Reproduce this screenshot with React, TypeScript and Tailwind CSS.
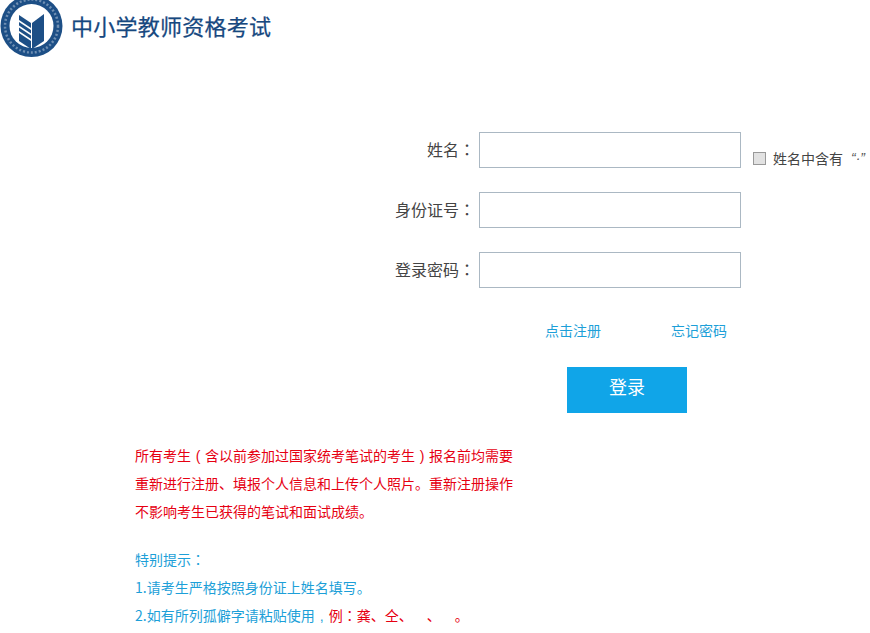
const Tc = ({ children }: { children: string }) => (
  <span className="font-['Noto_Sans_CJK_TC',sans-serif] leading-none">{children}</span>
);

// half-width punctuation padded out to one character cell, as in the original page
const Punct = ({ children }: { children: string }) => (
  <span className="inline-block w-[14px] text-center font-['Liberation_Sans',sans-serif] leading-none">{children}</span>
);

export default function App() {
  const sans = "font-['Microsoft_YaHei','Noto_Sans_CJK_SC',sans-serif]";

  const fields = [
    { label: '姓名', type: 'text' },
    { label: '身份证号', type: 'text' },
    { label: '登录密码', type: 'password' },
  ];

  return (
    <div className={`h-[633px] overflow-hidden bg-white ${sans}`}>
      {/* logo + title */}
      <div className="flex h-[62px] items-start">
        <svg width="64" height="58" viewBox="0 0 64 58" className="shrink-0">
          <circle cx="31.5" cy="26" r="31" fill="#1d4f86" />
          <circle cx="31.5" cy="26" r="26.5" fill="none" stroke="#6f8fb3" strokeWidth="2.5" strokeDasharray="2 2" />
          <circle cx="31.5" cy="26" r="22" fill="#fff" />
          <path d="M32 23 L44 14 V41 L32 49 Z" fill="#1d4f86" />
          <path d="M19 15 L31 23 V28 L19 20 Z M19 22 L31 30 V33.5 L19 25.5 Z M19 27.5 L31 35.5 V39 L19 31 Z M19 33 L31 41 V49 L19 41 Z" fill="#1d4f86" />
        </svg>
        <div className="ml-[7px] mt-[10px] text-[22px] leading-[30px] tracking-[0.25px] text-[#17487f] [-webkit-text-stroke:0.25px_#17487f]">
          中小学教师资格考试
        </div>
      </div>

      {/* form */}
      <div className="mt-[70px] flex flex-col gap-6">
        {fields.map((f, i) => (
          <div key={f.label} className="flex items-center">
            <label className="w-[475px] shrink-0 text-right text-[16px] leading-6 -mt-[2px] text-[#444]">
              {f.label}
              <Tc>：</Tc>
            </label>
            <input type={f.type} className="ml-[4px] h-9 w-[262px] shrink-0 border border-[#abb8c3] bg-white outline-none" />
            {i === 0 && (
              <div className="ml-3 mt-[16px] flex items-center text-[14px] leading-5 whitespace-nowrap text-[#444]">
                <input type="checkbox" className="h-[13px] w-[13px] appearance-none border border-[#999] bg-[#e2e2e2]" />
                <span className="ml-[7px]">姓名中含有</span>
                <span className="ml-2 font-['Liberation_Sans',sans-serif] italic text-[#555]">“·”</span>
              </div>
            )}
          </div>
        ))}
      </div>

      {/* links */}
      <div className="mt-[32px] flex text-[14px] leading-5 text-[#1d9fd8]">
        <a className="ml-[545px]">点击注册</a>
        <a className="ml-[70px]">忘记密码</a>
      </div>

      <div className="mt-[27px] ml-[567px]">
        <button className="h-[46px] w-[120px] bg-[#10a5e8] pb-[7px] text-[18px] leading-[39px] text-white">登录</button>
      </div>

      {/* notes */}
      <div className="mt-[28px] ml-[135px] w-[400px] text-[14px] leading-7">
        <div className="text-[#e60012]">
          <p>所有考生<Punct>(</Punct>含以前参加过国家统考笔试的考生<Punct>)</Punct>报名前均需要</p>
          <p>重新进行注册、填报个人信息和上传个人照片。重新注册操作</p>
          <p>不影响考生已获得的笔试和面试成绩。</p>
        </div>
        <div className="mt-[20px] text-[#1d9fd8]">
          <p>特别提示<Tc>：</Tc></p>
          <p>1.请考生严格按照身份证上姓名填写。</p>
          <p className="whitespace-nowrap">
            2.如有所列孤僻字请粘贴使用<Punct>,</Punct>
            <span className="text-[#e60012]">例<Tc>：</Tc>龚、仝、&emsp;、&emsp;。</span>
          </p>
        </div>
      </div>
    </div>
  );
}
